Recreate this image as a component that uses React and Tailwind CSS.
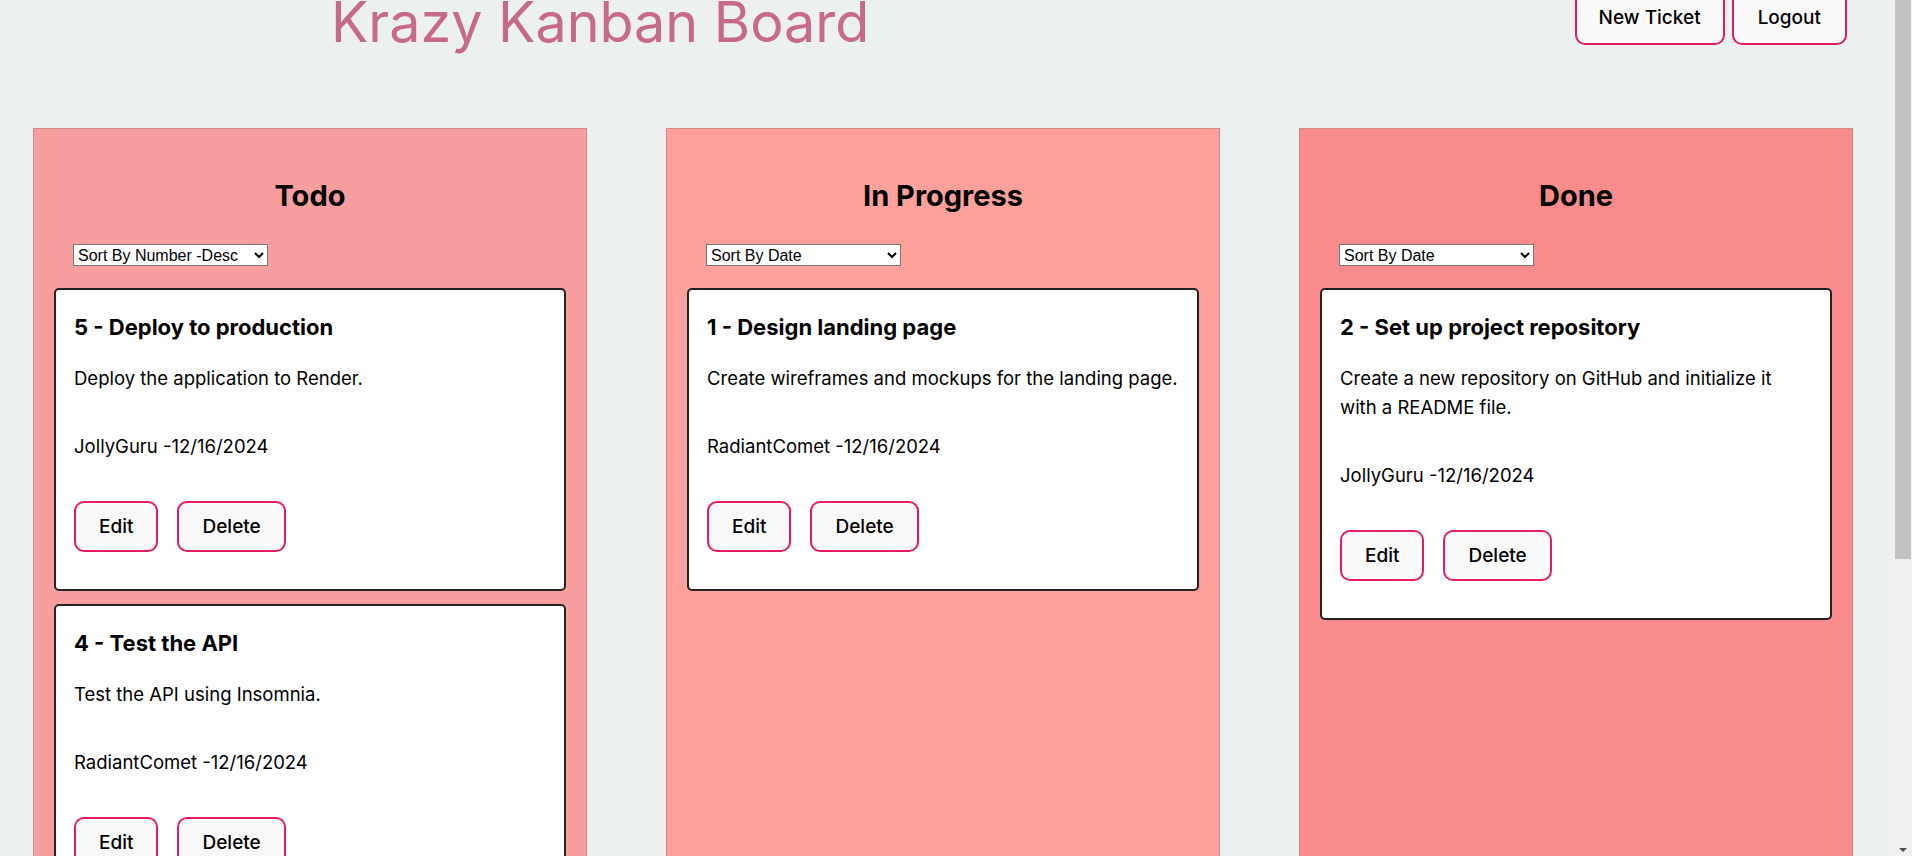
const columns = [
  {
    title: 'Todo',
    bg: 'bg-[#f99e9e]',
    sort: 'Sort By Number -Desc',
    tickets: [
      { id: 5, name: 'Deploy to production', desc: 'Deploy the application to Render.', user: 'JollyGuru', date: '12/16/2024' },
      { id: 4, name: 'Test the API', desc: 'Test the API using Insomnia.', user: 'RadiantComet', date: '12/16/2024' },
    ],
  },
  {
    title: 'In Progress',
    bg: 'bg-[#ffa19a]',
    sort: 'Sort By Date',
    tickets: [
      { id: 1, name: 'Design landing page', desc: 'Create wireframes and mockups for the landing page.', user: 'RadiantComet', date: '12/16/2024' },
    ],
  },
  {
    title: 'Done',
    bg: 'bg-[#f98b8b]',
    sort: 'Sort By Date',
    tickets: [
      { id: 2, name: 'Set up project repository', desc: 'Create a new repository on GitHub and initialize it with a README file.', user: 'JollyGuru', date: '12/16/2024' },
    ],
  },
];

const sortOptions = ['Sort By Date', 'Sort By Number -Asc', 'Sort By Number -Desc'];

const PinkButton = ({ children, className = 'h-[51px] px-[23px]' }) => (
  <button
    className={`border-2 border-[#e31d5f] rounded-[10px] bg-[#f9f9f9] text-[19px] font-medium leading-none text-black ${className}`}
  >
    {children}
  </button>
);

function TicketCard({ ticket }) {
  return (
    <div className="bg-white border-2 border-[#222] rounded-[5px] pl-[18px] pr-[19px] pt-[20px] pb-[37px]">
      <h3 className="text-[22px] font-bold leading-[34px] mb-[20px]">
        {ticket.id} - {ticket.name}
      </h3>
      <p className="text-[18.5px] leading-[29px] mb-[39px]">{ticket.desc}</p>
      <p className="text-[18.5px] leading-[29px] mb-[40px]">
        {ticket.user} -{ticket.date}
      </p>
      <div className="flex gap-[19px]">
        <PinkButton>Edit</PinkButton>
        <PinkButton>Delete</PinkButton>
      </div>
    </div>
  );
}

function Column({ col }) {
  return (
    <div className={`w-[554px] h-[760px] shrink-0 border border-[#d08a8a] px-[20px] ${col.bg}`}>
      <h2 className="text-[29px] font-bold leading-[44px] text-center pt-[45px]">{col.title}</h2>
      <select
        defaultValue={col.sort}
        className="mt-[26px] ml-[19px] w-[195px] h-[22px] text-[16px] bg-white border border-[#767676] text-black"
        style={{ fontFamily: '"Liberation Sans", Arial, sans-serif' }}
      >
        {sortOptions.map((o) => (
          <option key={o}>{o}</option>
        ))}
      </select>
      <div className="mt-[21px] flex flex-col gap-[13px]">
        {col.tickets.map((t) => (
          <TicketCard key={t.id} ticket={t} />
        ))}
      </div>
    </div>
  );
}

export default function App() {
  return (
    <div
      className="w-[1912px] h-[856px] overflow-hidden flex bg-[#ecf0f1] text-black"
      style={{ fontFamily: 'Inter, "Noto Sans", sans-serif' }}
    >
      <main className="flex-1 overflow-hidden">
        <header className="flex justify-between items-start h-[144px] -mt-[16px] pl-[331px] pr-[47px]">
          <h1 className="mt-[7px] text-[55.6px] leading-[1.1] font-normal text-[#c6698b]">Krazy Kanban Board</h1>
          <div className="flex gap-[7px] mt-[5px]">
            <PinkButton className="h-[56px] px-[22px] text-[18.5px]">New Ticket</PinkButton>
            <PinkButton className="h-[56px] px-[24px] text-[18.5px]">Logout</PinkButton>
          </div>
        </header>
        <div className="flex gap-[79px] pl-[33px] items-start">
          {columns.map((c) => (
            <Column key={c.title} col={c} />
          ))}
        </div>
      </main>
      <div className="w-[18px] h-full bg-[#f1f1f1] flex flex-col">
        <div className="h-[559px] mx-[1px] bg-[#c1c1c1]" />
        <div className="flex-1" />
        <div className="h-[12px] flex justify-center items-center">
          <div className="w-0 h-0 border-l-[4px] border-r-[4px] border-t-[4px] border-l-transparent border-r-transparent border-t-[#505050]" />
        </div>
      </div>
    </div>
  );
}
